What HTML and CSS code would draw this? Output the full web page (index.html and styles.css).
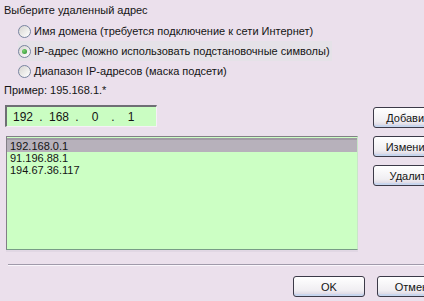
FILE: index.html
```html
<!DOCTYPE html>
<html lang="ru">
<head>
    <meta charset="UTF-8">
    <title>Удаленный адрес</title>
    <link rel="stylesheet" href="styles.css">
</head>
<body>
    <div class="dialog">
        <div class="caption">Выберите удаленный адрес</div>
        <div class="choices">
            <label class="choice"><span class="radio"></span>Имя домена (требуется подключение к сети Интернет)</label>
            <label class="choice choice-focus"><span class="radio radio-on"></span>IP-адрес (можно использовать подстановочные символы)</label>
            <label class="choice"><span class="radio"></span>Диапазон IP-адресов (маска подсети)</label>
        </div>
        <div class="example">Пример: 195.168.1.*</div>

        <div class="workspace">
            <div class="left">
                <div class="ipbox">
                    <span class="octet">192</span><span class="dot">.</span>
                    <span class="octet">168</span><span class="dot">.</span>
                    <span class="octet">0</span><span class="dot">.</span>
                    <span class="octet">1</span>
                </div>
                <div class="list">
                    <div class="item item-selected">192.168.0.1</div>
                    <div class="item">91.196.88.1</div>
                    <div class="item">194.67.36.117</div>
                </div>
            </div>
            <div class="side">
                <button class="btn">Добавить</button>
                <button class="btn">Изменить</button>
                <button class="btn">Удалить</button>
            </div>
        </div>

        <div class="separator"></div>

        <div class="footer">
            <button class="btn btn-ok">OK</button>
            <button class="btn">Отмена</button>
        </div>
    </div>
</body>
</html>
```

FILE: styles.css
```css
html, body {
    margin: 0;
    padding: 0;
    overflow: hidden;
}
body {
    background-color: rgb(235, 224, 236);
    font-family: "Liberation Sans", Arial, sans-serif;
    font-size: 11px;
    color: rgb(20, 20, 20);
}
.dialog {
    width: 520px;
    padding: 4px 0 0 0;
}
.caption {
    line-height: 13px;
    padding-left: 4px;
}
.choices {
    margin-top: 4px;
    padding-left: 18px;
    display: flex;
    flex-direction: column;
    align-items: flex-start;
}
.choice {
    display: flex;
    align-items: center;
    height: 20px;
    gap: 3px;
    white-space: nowrap;
}
.choice-focus {
    padding-right: 2px;
    background-color: rgb(229, 226, 232);
}
.radio {
    width: 11px;
    height: 11px;
    border: 1px solid rgb(120, 132, 160);
    border-radius: 50%;
    background: linear-gradient(135deg, rgb(214, 212, 208), rgb(255, 255, 255));
    display: flex;
    align-items: center;
    justify-content: center;
}
.radio-on::after {
    content: "";
    width: 5px;
    height: 5px;
    border-radius: 50%;
    background: radial-gradient(circle at 35% 35%, rgb(120, 210, 110), rgb(40, 140, 50));
}
.example {
    margin-top: 3px;
    line-height: 13px;
    padding-left: 4px;
}
.workspace {
    display: flex;
    gap: 15px;
    margin-top: 8px;
}
.left {
    padding-left: 5px;
    width: 353px;
}
.ipbox {
    width: 145px;
    height: 19px;
    display: flex;
    align-items: center;
    padding-left: 4px;
    background-color: rgb(202, 253, 194);
    border-top: 2px solid rgb(110, 110, 116);
    border-left: 2px solid rgb(110, 110, 116);
    border-bottom: 1px solid rgb(245, 240, 246);
    border-right: 1px solid rgb(245, 240, 246);
    font-size: 12px;
}
.octet {
    width: 24px;
    text-align: center;
}
.dot {
    width: 12px;
    text-align: center;
}
.list {
    margin-top: 9px;
    margin-left: 1px;
    height: 111px;
    background-color: rgb(204, 255, 196);
    border-top: 1px solid rgb(130, 126, 134);
    border-left: 1px solid rgb(130, 126, 134);
    border-bottom: 1px solid rgb(120, 156, 134);
    border-right: 1px solid rgb(200, 230, 200);
    box-shadow: 0 2px 0 rgb(225, 215, 228);
    padding-top: 1px;
}
.item {
    line-height: 12px;
    padding-left: 3px;
}
.item-selected {
    background-color: rgb(183, 177, 187);
    border-top: 2px solid rgb(160, 154, 164);
    line-height: 12px;
}
.side {
    display: flex;
    flex-direction: column;
    gap: 8px;
    padding-top: 2px;
}
.btn {
    width: 75px;
    height: 21px;
    font-family: "Liberation Sans", Arial, sans-serif;
    font-size: 11px;
    color: rgb(20, 20, 20);
    border: 1px solid rgb(60, 58, 72);
    border-radius: 3px;
    background: linear-gradient(rgb(255, 255, 255), rgb(240, 238, 242) 70%, rgb(214, 208, 222));
    padding: 0;
    text-align: center;
    box-shadow: inset 0 -2px 0 rgb(200, 214, 238);
}
.separator {
    margin: 14px 0 0 8px;
    height: 1px;
    background-color: rgb(160, 154, 170);
    border-bottom: 1px solid rgb(250, 246, 252);
}
.footer {
    display: flex;
    gap: 12px;
    margin-top: 10px;
    padding-left: 293px;
}
.btn-ok {
    width: 72px;
}
```
